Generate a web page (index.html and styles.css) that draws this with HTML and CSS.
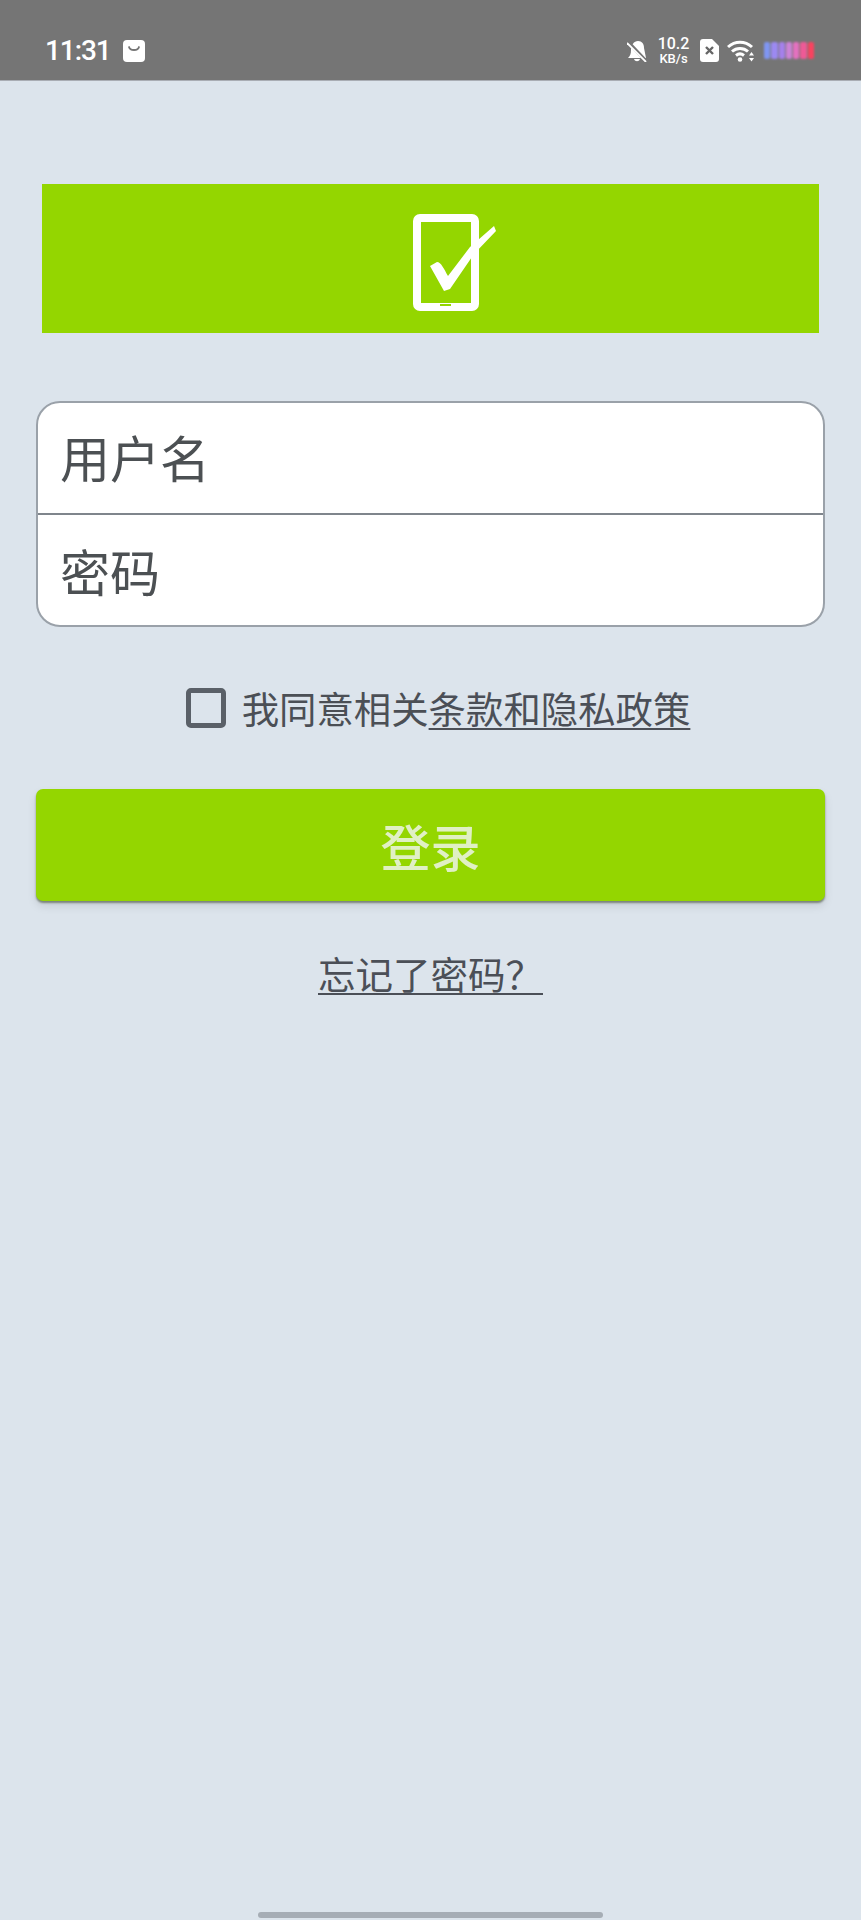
FILE: index.html
```html
<!DOCTYPE html>
<html lang="zh-CN">
<head>
    <meta charset="UTF-8">
    <meta name="viewport" content="width=device-width, initial-scale=1.0">
    <title>登录</title>
    <link rel="stylesheet" href="styles.css">
</head>
<body>
    <header class="status-bar">
        <div class="status-left">
            <span class="clock">11:31</span>
            <svg class="bag-icon" viewBox="0 0 22 22">
                <rect width="22" height="22" rx="4" fill="#fff"/>
                <path d="M6 7c1 4 9 4 10 0" fill="none" stroke="#757575" stroke-width="1.8" stroke-linecap="round"/>
            </svg>
        </div>
        <div class="status-right">
            <svg class="bell-icon" viewBox="0 0 20 22">
                <path d="M1 18c2-2 3-4 3-8 0-5 3-9 7-9 4 0 6 3 6 7l2 10z" fill="#fff"/>
                <path d="M7 19c1 3 5 3 6 0z" fill="#fff"/>
                <path d="M1 2l18 19" stroke="#757575" stroke-width="3.500"/>
                <path d="M0 3l19 19" stroke="#fff" stroke-width="1.800"/>
            </svg>
            <div class="speed">
                <span class="speed-num">10.2</span>
                <span class="speed-unit">KB/s</span>
            </div>
            <svg class="sim-icon" viewBox="0 0 19 23">
                <path d="M3 0h9l7 7v13a3 3 0 0 1-3 3H3a3 3 0 0 1-3-3V3a3 3 0 0 1 3-3z" fill="#fff"/>
                <path d="M6 8l7 7M13 8l-7 7" stroke="#666" stroke-width="2.400"/>
            </svg>
            <svg class="wifi-icon" viewBox="0 0 28 22">
                <g fill="none" stroke="#fff" stroke-width="3">
                    <path d="M1 7c7-6.500 17-6.500 24 0"/>
                    <path d="M5 11.500c4.500-4 11.500-4 16 0"/>
                    <path d="M9 15.500c2.500-2 5.500-2 8 0"/>
                </g>
                <circle cx="13" cy="19.500" r="2.300" fill="#fff"/>
                <path d="M24.500 12l2.500 3.500h-5zM24.500 21.500l2.500-3.500h-5z" fill="#fff"/>
            </svg>
            <div class="battery">
                <span class="cell cell-1"></span>
                <span class="cell cell-2"></span>
                <span class="cell cell-3"></span>
                <span class="cell cell-4"></span>
                <span class="cell cell-5"></span>
                <span class="cell cell-6"></span>
                <span class="cell cell-7"></span>
            </div>
        </div>
    </header>

    <main class="login">
        <div class="banner">
            <svg class="logo" viewBox="0 0 84 98">
                <rect x="4" y="4" width="58" height="89" rx="3" fill="none" stroke="#fff" stroke-width="8"/>
                <rect x="27" y="90" width="11" height="2" fill="#94d600"/>
                <path d="M17 52l7-4c4 0 7 7 11 14l22-29 24-21 2 5-22 23-24 35-6 2z" fill="#fff"/>
            </svg>
        </div>

        <form class="fields">
            <div class="field">用户名</div>
            <div class="field">密码</div>
        </form>

        <div class="agree">
            <span class="checkbox"></span>
            <span class="agree-text">我同意相关<a class="link" href="#">条款和隐私政策</a></span>
        </div>

        <button class="submit" type="button">登录</button>

        <a class="forgot link" href="#">忘记了密码？</a>
    </main>

    <div class="home-bar"></div>
</body>
</html>
```

FILE: styles.css
```css
html, body {
    height: 100%;
}
body {
    margin: 0;
    background: #dce4ec;
    font-family: "Noto Sans CJK SC", "Noto Sans", sans-serif;
    color: #4b4f55;
    display: flex;
    flex-direction: column;
    overflow: hidden;
}
.status-bar {
    height: 81px;
    flex: none;
    box-sizing: border-box;
    background: #757575;
    border-bottom: 1px solid #a9adb4;
    display: flex;
    justify-content: space-between;
    align-items: center;
    padding: 21px 47px 0 45px;
    color: #fff;
}
.status-left {
    display: flex;
    align-items: center;
    gap: 12px;
}
.clock {
    font-family: Roboto, sans-serif;
    font-size: 28px;
    font-weight: 500;
    letter-spacing: -1.1px;
}
.bag-icon {
    width: 22px;
    height: 22px;
}
.status-right {
    display: flex;
    align-items: center;
}
.bell-icon {
    width: 20px;
    height: 22px;
    margin-right: 10px;
}
.speed {
    display: flex;
    flex-direction: column;
    align-items: center;
    width: 33px;
    line-height: 1;
    font-family: Roboto, sans-serif;
    font-weight: 500;
}
.speed-num {
    font-size: 16px;
}
.speed-unit {
    font-size: 13px;
}
.sim-icon {
    width: 19px;
    height: 23px;
    margin-left: 10px;
}
.wifi-icon {
    width: 28px;
    height: 22px;
    margin-left: 8px;
}
.battery {
    display: flex;
    gap: 1px;
    width: 50px;
    height: 17px;
    margin-left: 9px;
    filter: blur(1px) saturate(1.3);
}
.cell {
    flex: 1;
    border-radius: 2px;
}
.cell-1 { background: #8596dc; }
.cell-2 { background: #9a8cdc; }
.cell-3 { background: #a084d6; }
.cell-4 { background: #c088c8; }
.cell-5 { background: #d078b4; }
.cell-6 { background: #d46290; }
.cell-7 { background: #d84c62; }

.login {
    display: flex;
    flex-direction: column;
    align-items: center;
    padding: 103px 36px 0;
}
.banner {
    align-self: stretch;
    margin: 0 6px;
    height: 149px;
    background: #94d600;
    display: flex;
    justify-content: center;
    align-items: center;
}
.logo {
    width: 84px;
    height: 98px;
    margin: 8px 0 0 48px;
}
.fields {
    align-self: stretch;
    box-sizing: border-box;
    margin-top: 68px;
    height: 226px;
    background: #fff;
    border: 2px solid #9aa1a9;
    border-radius: 24px;
    overflow: hidden;
}
.field {
    height: 111px;
    box-sizing: border-box;
    padding-left: 22px;
    display: flex;
    align-items: center;
    font-size: 50px;
    line-height: 1;
    color: #4c5053;
}
.field:first-child {
    height: 110px;
    padding-bottom: 4px;
}
.field + .field {
    border-top: 2px solid #7f858c;
}
.agree {
    display: flex;
    align-items: center;
    margin-top: 60px;
    height: 42px;
    margin-left: 15px;
}
.checkbox {
    width: 40px;
    height: 40px;
    box-sizing: border-box;
    border: 5px solid #5a6068;
    border-radius: 5px;
    margin-right: 16px;
}
.agree-text {
    font-size: 37.400px;
    line-height: 42px;
}
.link {
    color: #4b4f57;
    text-decoration: underline;
    text-decoration-thickness: 2px;
    text-underline-offset: 4px;
}
.submit {
    align-self: stretch;
    height: 112px;
    margin-top: 60px;
    border: none;
    border-radius: 7px;
    background: #94d600;
    color: #e0f0c4;
    font-family: inherit;
    font-size: 50px;
    font-weight: 500;
    box-shadow: 0 2px 2px rgba(70, 80, 60, 0.6), 0 5px 10px rgba(0, 0, 0, 0.1);
}
.forgot {
    margin-top: 48px;
    font-size: 37.500px;
    line-height: 48px;
    white-space: pre;
}
.home-bar {
    position: absolute;
    left: 258px;
    bottom: 2px;
    width: 345px;
    height: 6px;
    border-radius: 3px;
    background: #a6adb5;
}
```
